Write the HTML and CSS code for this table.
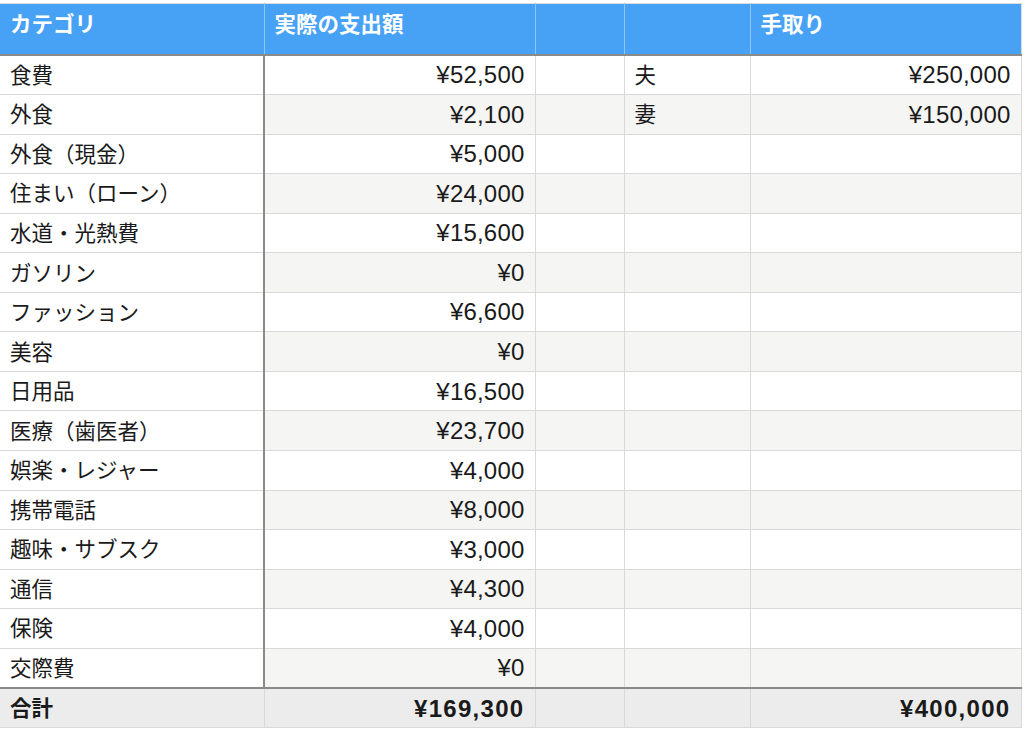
FILE: index.html
```html
<!DOCTYPE html>
<html lang="ja">
<head>
<meta charset="utf-8">
<title>支出</title>
<link rel="stylesheet" href="styles.css">
</head>
<body>
<table class="sheet">
  <colgroup>
    <col class="c1"><col class="c2"><col class="c3"><col class="c4"><col class="c5">
  </colgroup>
  <thead>
    <tr class="head">
      <th>カテゴリ</th><th>実際の支出額</th><th></th><th></th><th>手取り</th>
    </tr>
  </thead>
  <tbody>
    <tr><td class="cat">食費</td><td class="num">¥52,500</td><td></td><td class="txt">夫</td><td class="num">¥250,000</td></tr>
    <tr class="alt"><td class="cat">外食</td><td class="num">¥2,100</td><td></td><td class="txt">妻</td><td class="num">¥150,000</td></tr>
    <tr><td class="cat">外食（現金）</td><td class="num">¥5,000</td><td></td><td></td><td></td></tr>
    <tr class="alt"><td class="cat">住まい（ローン）</td><td class="num">¥24,000</td><td></td><td></td><td></td></tr>
    <tr><td class="cat">水道・光熱費</td><td class="num">¥15,600</td><td></td><td></td><td></td></tr>
    <tr class="alt"><td class="cat">ガソリン</td><td class="num">¥0</td><td></td><td></td><td></td></tr>
    <tr><td class="cat">ファッション</td><td class="num">¥6,600</td><td></td><td></td><td></td></tr>
    <tr class="alt"><td class="cat">美容</td><td class="num">¥0</td><td></td><td></td><td></td></tr>
    <tr><td class="cat">日用品</td><td class="num">¥16,500</td><td></td><td></td><td></td></tr>
    <tr class="alt"><td class="cat">医療（歯医者）</td><td class="num">¥23,700</td><td></td><td></td><td></td></tr>
    <tr><td class="cat">娯楽・レジャー</td><td class="num">¥4,000</td><td></td><td></td><td></td></tr>
    <tr class="alt"><td class="cat">携帯電話</td><td class="num">¥8,000</td><td></td><td></td><td></td></tr>
    <tr><td class="cat">趣味・サブスク</td><td class="num">¥3,000</td><td></td><td></td><td></td></tr>
    <tr class="alt"><td class="cat">通信</td><td class="num">¥4,300</td><td></td><td></td><td></td></tr>
    <tr><td class="cat">保険</td><td class="num">¥4,000</td><td></td><td></td><td></td></tr>
    <tr class="alt"><td class="cat">交際費</td><td class="num">¥0</td><td></td><td></td><td></td></tr>
  </tbody>
  <tfoot>
    <tr class="total"><td class="cat">合計</td><td class="num">¥169,300</td><td></td><td></td><td class="num">¥400,000</td></tr>
  </tfoot>
</table>
</body>
</html>
```
FILE: styles.css
```css
html, body {
  margin: 0;
  padding: 0;
  background: #ffffff;
}

body {
  padding-top: 3px;
  font-family: "Liberation Sans", "Noto Sans CJK JP", sans-serif;
  color: #1a1a1a;
}

.sheet {
  border-collapse: collapse;
  table-layout: fixed;
  width: 1021px;
  font-size: 21.5px;
  line-height: 1.3;
}

.c1 { width: 264px; }
.c2 { width: 271px; }
.c3 { width: 89px; }
.c4 { width: 126px; }
.c5 { width: 271px; }

.sheet td,
.sheet th {
  padding: 0 10px;
  border: 1px solid #d9d9d9;
  white-space: nowrap;
  overflow: hidden;
}

.head th {
  height: 51px;
  background: #47a2f6;
  color: #ffffff;
  font-size: 21.5px;
  font-weight: bold;
  text-align: left;
  vertical-align: top;
  padding-top: 8px;
  box-sizing: border-box;
  border-top: 1px solid #dcdcdc;
  border-left: 1px solid #8fc4f6;
  border-right: 1px solid #8fc4f6;
  border-bottom: 2px solid #8a8a8a;
}

.head th:first-child { border-left: none; }
.head th:last-child { border-right: 1px solid #dcdcdc; }

tbody td {
  height: 38.56px;
  background: #ffffff;
  vertical-align: middle;
}

tbody td.cat,
tbody td.txt {
  height: 34.56px;
  padding-top: 4px;
}

tbody tr.alt td {
  background: #f5f5f4;
}

tbody tr td.cat,
tbody tr.alt td.cat {
  background: #ffffff;
  border-right: 2px solid #8a8a8a;
}

.sheet td:first-child { border-left: none; }

.num {
  text-align: right;
  font-size: 24px;
  letter-spacing: 0.2px;
}

.total td {
  height: 38px;
  background: #ececec;
  font-weight: bold;
  border-top: 2px solid #8a8a8a;
  vertical-align: middle;
}

.total td.cat {
  height: 34px;
  padding-top: 4px;
  border-right: 1px solid #d9d9d9;
}

.total td.num {
  letter-spacing: 1.3px;
}
```
